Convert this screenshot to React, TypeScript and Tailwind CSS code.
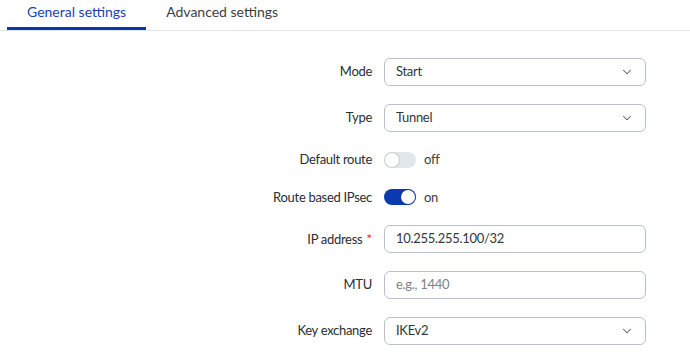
import { ChevronDown } from 'lucide-react';

const Label = ({ text, required = false }: { text: string; required?: boolean }) => (
  <div className="text-right text-[13px] tracking-[-0.3px] text-[#2a2d33]">
    {text}
    {required && <span className="ml-1 text-[14px] text-[#e0322b]">*</span>}
  </div>
);

const Select = ({ value }: { value: string }) => (
  <div className="flex h-[28px] items-center justify-between rounded-[6px] border border-[#b9c0cc] pl-[11px] pr-[11px] text-[13px] tracking-[-0.3px] text-[#33363b]">
    <span>{value}</span>
    <ChevronDown size={14} strokeWidth={1.75} className="text-[#555a63]" />
  </div>
);

const Input = ({ value, placeholder }: { value?: string; placeholder?: string }) => (
  <div className="flex h-[28px] items-center rounded-[6px] border border-[#b9c0cc] px-[11px] text-[13px] tracking-[-0.3px]">
    {value ? <span className="text-[#33363b]">{value}</span> : <span className="text-[#7b8089]">{placeholder}</span>}
  </div>
);

const Toggle = ({ on }: { on: boolean }) => (
  <div className="flex h-[18px] items-center gap-[8px]">
    <div
      className={
        on
          ? 'flex h-[16px] w-[32px] items-center justify-end rounded-full bg-[#0a3aad] px-[1px]'
          : 'flex h-[16px] w-[32px] items-center justify-start rounded-full bg-[#e3e6eb] px-[1px]'
      }
    >
      <div className="h-[14px] w-[14px] rounded-full bg-white shadow-[0_0_2px_rgba(0,0,0,0.35)]" />
    </div>
    <span className="text-[13px] tracking-[-0.3px] text-[#3a3e45]">{on ? 'on' : 'off'}</span>
  </div>
);

export default function App() {
  return (
    <div className="h-[361px] w-[690px] overflow-hidden bg-white font-['Lato',sans-serif]">
      {/* Tabs */}
      <div className="flex h-[31px] border-b border-[#e3e6ec] pl-[7px]">
        <div className="flex h-[30px] items-center border-b-[3px] border-[#0a37a8] px-[20px] pb-[5px] text-[14px] text-[#1444b4]">
          General settings
        </div>
        <div className="flex h-[30px] items-center px-[20px] pb-[8px] text-[14px] text-[#3a3e45]">
          Advanced settings
        </div>
      </div>

      {/* Form */}
      <div className="mt-[27px] grid grid-cols-[372px_262px] items-center gap-x-3 gap-y-[18px]">
        <Label text="Mode" />
        <Select value="Start" />

        <Label text="Type" />
        <Select value="Tunnel" />

        <Label text="Default route" />
        <Toggle on={false} />

        <Label text="Route based IPsec" />
        <Toggle on />

        <Label text="IP address" required />
        <Input value="10.255.255.100/32" />

        <Label text="MTU" />
        <Input placeholder="e.g., 1440" />

        <Label text="Key exchange" />
        <Select value="IKEv2" />
      </div>
    </div>
  );
}
